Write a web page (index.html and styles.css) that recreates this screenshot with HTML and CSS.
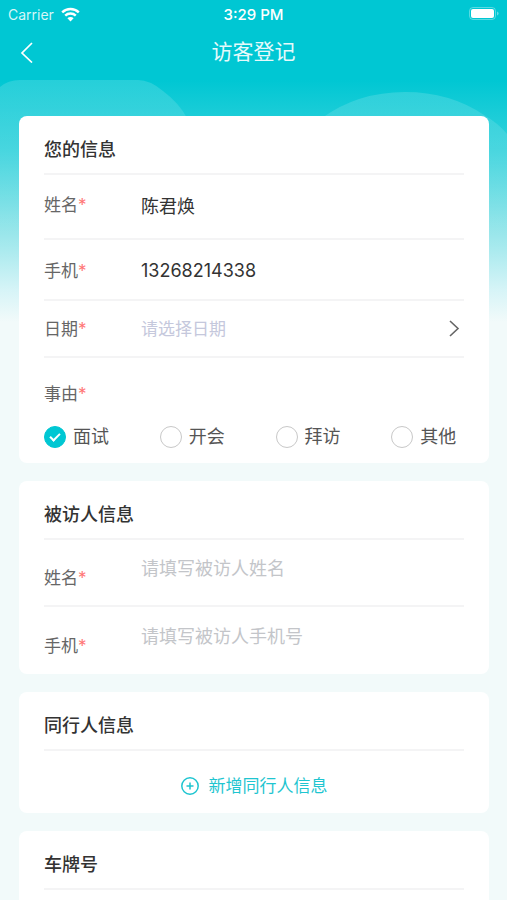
FILE: index.html
```html
<!DOCTYPE html>
<html lang="zh-CN">
<head>
<meta charset="utf-8">
<meta name="viewport" content="width=device-width, initial-scale=1">
<title>访客登记</title>
<link rel="stylesheet" href="styles.css">
</head>
<body>
<div class="app">
  <svg class="backdrop" viewBox="0 0 507 320" preserveAspectRatio="none" aria-hidden="true">
    <defs>
      <linearGradient id="hill" x1="0" y1="0" x2="0" y2="1">
        <stop offset="0" stop-color="#fff" stop-opacity=".15"/>
        <stop offset="1" stop-color="#fff" stop-opacity="0"/>
      </linearGradient>
    </defs>
    <path fill="url(#hill)" d="M0 87Q8 80 20 80H138Q150 80 163 91Q179 103 187 118V250H0Z"/>
    <path fill="url(#hill)" d="M322 118Q358 92 405 92Q450 92 484 115Q498 123 507 134V250H322Z"/>
  </svg>

  <div class="status">
    <div class="status-left">
      <span>Carrier</span>
      <svg width="19" height="15" viewBox="0 0 19 15" aria-hidden="true">
        <g fill="none" stroke="#fff" stroke-width="2.4">
          <path d="M1.2 5.4a12 12 0 0 1 16.6 0"/>
          <path d="M4.2 8.7a7.6 7.6 0 0 1 10.6 0"/>
        </g>
        <path fill="#fff" d="M6.4 11.2a4.4 4.4 0 0 1 6.2 0L9.5 14.4Z"/>
      </svg>
    </div>
    <span class="status-time">3:29 PM</span>
    <svg class="battery" width="30" height="14" viewBox="0 0 30 14" aria-hidden="true">
      <rect x=".5" y=".5" width="26" height="12" rx="3.5" fill="none" stroke="#fff" stroke-opacity=".35"/>
      <rect x="2" y="2" width="23" height="9" rx="2" fill="#fff"/>
      <path d="M28 4.5q1.6.6 1.6 2t-1.6 2z" fill="#fff" fill-opacity=".4"/>
    </svg>
  </div>

  <header class="nav">
    <button class="back" type="button" aria-label="返回">
      <svg width="14" height="22" viewBox="0 0 14 22" aria-hidden="true"><path d="M12 2L2 12l10 9.5" fill="none" stroke="#fff" stroke-width="1.7"/></svg>
    </button>
    <h1>访客登记</h1>
  </header>

  <form class="cards">
    <section class="card">
      <h2>您的信息</h2>
      <div class="row row-name">
        <label for="name">姓名<i>*</i></label>
        <input id="name" type="text" value="陈君焕">
      </div>
      <div class="row row-phone">
        <label for="phone">手机<i>*</i></label>
        <input id="phone" type="tel" value="13268214338">
      </div>
      <div class="row row-date">
        <label for="date">日期<i>*</i></label>
        <button class="picker" id="date" type="button">
          <span>请选择日期</span>
          <svg width="12" height="18" viewBox="0 0 12 18" aria-hidden="true"><path d="M2 1l8 7.5L2 16" fill="none" stroke="#666" stroke-width="1.6"/></svg>
        </button>
      </div>
      <fieldset class="reason">
        <legend>事由<i>*</i></legend>
        <div class="options">
          <label><input type="radio" name="reason" checked>面试</label>
          <label><input type="radio" name="reason">开会</label>
          <label><input type="radio" name="reason">拜访</label>
          <label><input type="radio" name="reason">其他</label>
        </div>
      </fieldset>
    </section>

    <section class="card">
      <h2>被访人信息</h2>
      <div class="row row-host">
        <label for="host-name">姓名<i>*</i></label>
        <input id="host-name" type="text" placeholder="请填写被访人姓名">
      </div>
      <div class="row row-host">
        <label for="host-phone">手机<i>*</i></label>
        <input id="host-phone" type="tel" placeholder="请填写被访人手机号">
      </div>
    </section>

    <section class="card">
      <h2>同行人信息</h2>
      <button class="add" type="button">
        <svg width="18" height="18" viewBox="0 0 18 18" aria-hidden="true"><g fill="none" stroke="#1fc5d0" stroke-width="1.5"><circle cx="9" cy="9" r="8.2"/><path d="M5.500 9h7M9 5.500v7"/></g></svg>
        <span>新增同行人信息</span>
      </button>
    </section>

    <section class="card card-last">
      <h2>车牌号</h2>
    </section>
  </form>
</div>
</body>
</html>
```
FILE: styles.css
```css
* {
  box-sizing: border-box;
}

body {
  margin: 0;
  background: #f2fafa;
  color: #333;
  font-family: Inter, "Noto Sans CJK SC", sans-serif;
}

button,
input {
  margin: 0;
  padding: 0;
  border: 0;
  background: none;
  color: inherit;
  font: inherit;
}

.app {
  position: relative;
  display: flex;
  flex-direction: column;
  min-height: 100vh;
  background: linear-gradient(#00c7d3 0, #00c7d3 80px, #36d2dc 150px, #8ae3e8 220px, #d6f4f7 290px, #f2fafa 322px);
}

.backdrop {
  position: absolute;
  inset: 0 0 auto;
  width: 100%;
  height: 320px;
}

.status {
  position: relative;
  display: grid;
  grid-template-columns: 1fr auto 1fr;
  align-items: center;
  height: 28px;
  padding: 0 8px;
  color: #fff;
  font-size: 14px;
}

.status-left {
  display: flex;
  align-items: center;
  gap: 7px;
  color: #d5f6f8;
}

.status-time {
  font-size: 15px;
  font-weight: 500;
}

.battery {
  justify-self: end;
}

.nav {
  position: relative;
  display: grid;
  grid-template-columns: 40px 1fr 40px;
  align-items: center;
  height: 48px;
  color: #e6fafb;
}

.back {
  display: flex;
  justify-content: flex-end;
  padding-right: 6px;
}

h1 {
  margin: 0;
  font-size: 21px;
  font-weight: 400;
  line-height: 32px;
  text-align: center;
}

.cards {
  position: relative;
  display: flex;
  flex: 1;
  flex-direction: column;
  gap: 18px;
  padding: 40px 18px 0 19px;
}

.card {
  padding: 0 25px;
  border-radius: 8px;
  background: #fff;
}

.card-last {
  flex: 1;
  border-radius: 8px 8px 0 0;
}

h2 {
  margin: 0;
  padding: 20px 0 9px;
  border-bottom: 2px solid #f4f4f5;
  font-size: 18px;
  font-weight: 500;
  line-height: 28px;
}

.row {
  display: flex;
  align-items: center;
  border-bottom: 2px solid #f4f4f5;
}

.row:last-child {
  border-bottom: 0;
}

.row > label {
  flex: 0 0 97px;
}

.row > label,
legend {
  color: #666;
  font-size: 17px;
  line-height: 24px;
}

i {
  color: #ff7675;
  font-style: normal;
}

.row input {
  flex: 1;
  min-width: 0;
  height: 28px;
  font-size: 18px;
  outline: 0;
}

input::placeholder {
  color: #c3c5c9;
  opacity: 1;
}

.row-name {
  height: 65px;
  padding-bottom: 4px;
}

.row-phone {
  height: 61px;
  padding-top: 2px;
}

.row-date {
  height: 57px;
}

.picker {
  display: flex;
  flex: 1;
  align-items: center;
  justify-content: space-between;
  padding-right: 4px;
  color: #c5c8dc;
  font-size: 17px;
  line-height: 24px;
}

.reason {
  min-width: 0;
  margin: 0;
  padding: 24px 0 12px;
  border: 0;
}

legend {
  float: left;
  width: 100%;
  padding: 0;
}

.options {
  display: grid;
  clear: both;
  grid-template-columns: repeat(4, 1fr);
  column-gap: 43px;
  padding-top: 17px;
}

.options label {
  display: flex;
  align-items: center;
  gap: 7px;
  color: #555;
  font-size: 18px;
  line-height: 28px;
  white-space: nowrap;
}

.options input {
  flex: none;
  width: 22px;
  height: 22px;
  border: 1px solid #c8c8c8;
  border-radius: 50%;
  appearance: none;
}

.options input:checked {
  display: grid;
  place-items: center;
  border-color: #00c7d3;
  background: #00c7d3;
}

.options input:checked::before {
  box-sizing: border-box;
  width: 10px;
  height: 6px;
  margin-bottom: 3px;
  border: solid #fff;
  border-width: 0 0 2px 2px;
  content: "";
  transform: rotate(-45deg);
}

.row-host {
  height: 67px;
}

.row-host > label {
  padding-top: 10px;
}

.row-host input {
  margin-bottom: 8px;
}

.add {
  display: flex;
  align-items: center;
  justify-content: center;
  gap: 10px;
  width: 100%;
  padding: 23px 0 15px;
  color: #1fc5d0;
  font-size: 17px;
  line-height: 24px;
}
```
